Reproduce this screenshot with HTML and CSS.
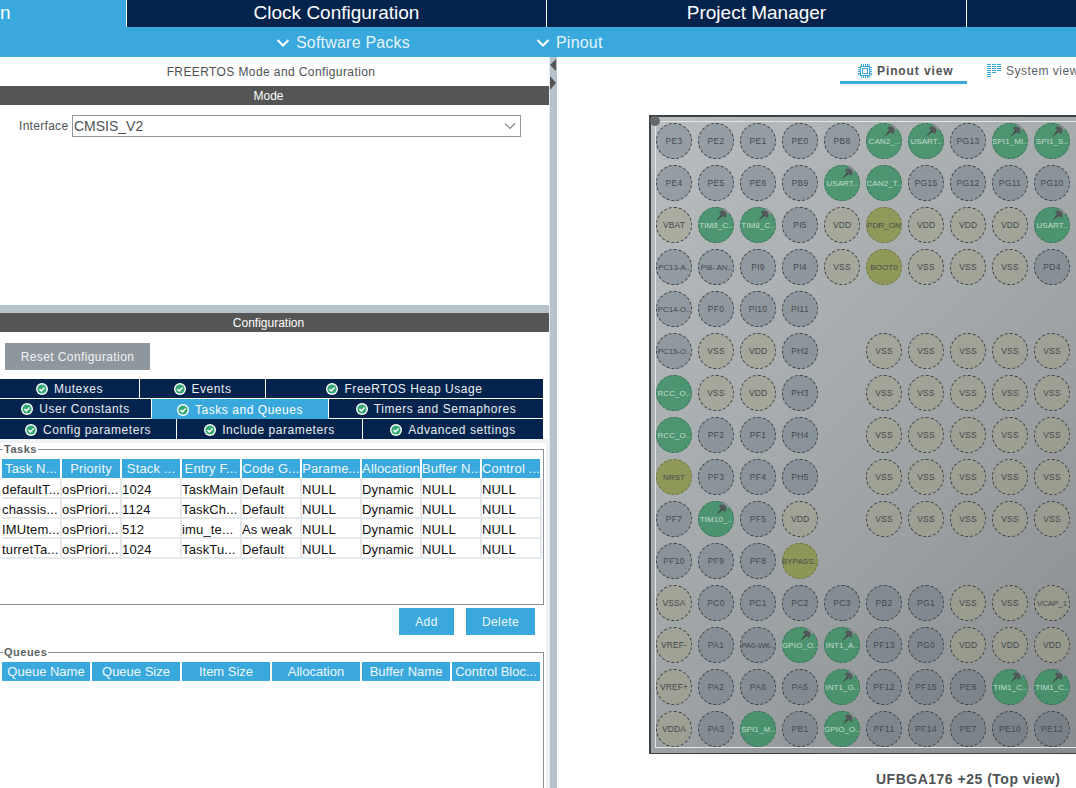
FILE: index.html
```html
<!DOCTYPE html>
<html lang="en">
<head>
  <meta charset="UTF-8" />
  <title>STM32CubeMX - Pinout &amp; Configuration</title>
  <link rel="stylesheet" href="styles.css">
</head>
<body>
  <svg class="defs" width="0" height="0">
    <symbol id="ok" viewBox="0 0 12 12">
      <circle cx="6" cy="6" r="6" fill="#fff"/>
      <circle cx="6" cy="6" r="4.6" fill="#33a874"/>
      <path d="M3.4 6l1.9 1.9 3.3-3.5" fill="none" stroke="#fff" stroke-width="1.5"/>
    </symbol>
    <symbol id="tack" viewBox="0 0 12 12">
      <path d="M0 12l4.5-6L6 7.5z" fill="#44484a"/>
      <path d="M2.5 4.5l5 5L9 8l-.5-2 2-2L8 1.5l-2 2-2-.5z" fill="#55595c"/>
      <path d="M7 .5L11.5 5l-1.2 1.2-4.5-4.5z" fill="#90949a"/>
    </symbol>
    <symbol id="down" viewBox="0 0 14 14">
      <path d="M1.5 4l5.5 5.5L12.5 4" fill="none" stroke="currentColor" stroke-width="2"/>
    </symbol>
  </svg>

  <header>
    <nav class="main-tabs">
      <a class="main-tab first">n</a>
      <a class="main-tab">Clock Configuration</a>
      <a class="main-tab">Project Manager</a>
      <a class="main-tab"></a>
    </nav>
    <nav class="sub-bar">
      <a class="sub-item"><svg class="chev"><use href="#down"/></svg>Software Packs</a>
      <a class="sub-item"><svg class="chev"><use href="#down"/></svg>Pinout</a>
    </nav>
  </header>

  <main>
    <section class="left">
      <div class="panel-title">FREERTOS Mode and Configuration</div>
      <div class="bar">Mode</div>
      <div class="mode-body">
        <label class="iface-label">Interface</label>
        <div class="select">CMSIS_V2<svg class="select-arrow" viewBox="0 0 12 8"><path d="M1 1.5l5 5 5-5" fill="none" stroke="#7d858b" stroke-width="1.2"/></svg></div>
      </div>
      <div class="splitter"></div>
      <div class="bar">Configuration</div>
      <div class="reset-row"><button class="reset">Reset Configuration</button></div>

      <div class="cfg-tabs">
        <div class="cfg-row row-a">
          <a class="cfg-tab"><svg class="ok"><use href="#ok"/></svg>Mutexes</a>
          <a class="cfg-tab"><svg class="ok"><use href="#ok"/></svg>Events</a>
          <a class="cfg-tab"><svg class="ok"><use href="#ok"/></svg>FreeRTOS Heap Usage</a>
        </div>
        <div class="cfg-row row-b">
          <a class="cfg-tab"><svg class="ok"><use href="#ok"/></svg>User Constants</a>
          <a class="cfg-tab active"><svg class="ok"><use href="#ok"/></svg>Tasks and Queues</a>
          <a class="cfg-tab"><svg class="ok"><use href="#ok"/></svg>Timers and Semaphores</a>
        </div>
        <div class="cfg-row row-c">
          <a class="cfg-tab"><svg class="ok"><use href="#ok"/></svg>Config parameters</a>
          <a class="cfg-tab"><svg class="ok"><use href="#ok"/></svg>Include parameters</a>
          <a class="cfg-tab"><svg class="ok"><use href="#ok"/></svg>Advanced settings</a>
        </div>
      </div>

      <div class="tab-page">
        <fieldset class="group tasks">
          <legend>Tasks</legend>
          <table>
            <thead>
              <tr><th>Task N...</th><th>Priority</th><th>Stack ...</th><th>Entry F...</th><th>Code G...</th><th>Parame...</th><th>Allocation</th><th>Buffer N...</th><th>Control ...</th></tr>
            </thead>
            <tbody>
              <tr><td>defaultT...</td><td>osPriori...</td><td>1024</td><td>TaskMain</td><td>Default</td><td>NULL</td><td>Dynamic</td><td>NULL</td><td>NULL</td></tr>
              <tr><td>chassis...</td><td>osPriori...</td><td>1124</td><td>TaskCh...</td><td>Default</td><td>NULL</td><td>Dynamic</td><td>NULL</td><td>NULL</td></tr>
              <tr><td>IMUtem...</td><td>osPriori...</td><td>512</td><td>imu_te...</td><td>As weak</td><td>NULL</td><td>Dynamic</td><td>NULL</td><td>NULL</td></tr>
              <tr><td>turretTa...</td><td>osPriori...</td><td>1024</td><td>TaskTu...</td><td>Default</td><td>NULL</td><td>Dynamic</td><td>NULL</td><td>NULL</td></tr>
            </tbody>
          </table>
        </fieldset>
        <div class="actions">
          <button class="btn add">Add</button>
          <button class="btn del">Delete</button>
        </div>
        <fieldset class="group queues">
          <legend>Queues</legend>
          <div class="queue-head">
            <span>Queue Name</span><span>Queue Size</span><span>Item Size</span><span>Allocation</span><span>Buffer Name</span><span>Control Bloc...</span>
          </div>
        </fieldset>
      </div>
    </section>

    <div class="divider">
      <i class="arrow-left"></i>
      <i class="arrow-right"></i>
    </div>

    <section class="right">
      <div class="view-tabs">
        <a class="view-tab on">
          <svg class="view-icon" viewBox="0 0 14 14" fill="none" stroke="#39a8dc">
            <rect x="2.5" y="2.5" width="9" height="9"/>
            <rect x="4.5" y="4.5" width="5" height="5"/>
            <path d="M3.5 0v2M5.5 0v2M7.5 0v2M9.5 0v2M11 0v2M3.5 12v2M5.5 12v2M7.5 12v2M9.5 12v2M11 12v2M0 3.5h2M0 5.5h2M0 7.5h2M0 9.5h2M0 11h2M12 3.5h2M12 5.5h2M12 7.5h2M12 9.5h2M12 11h2"/>
          </svg>
          Pinout view
        </a>
        <a class="view-tab">
          <svg class="view-icon" viewBox="0 0 14 14" fill="none" stroke="#39a8dc">
            <path d="M0 .5h4M5 .5h4M10 .5h4M0 2.5h4M5 2.5h4M10 2.5h4M0 4.5h4M5 4.5h4M10 4.5h4M0 6.5h4M5 6.5h4M10 6.5h4M0 8.5h4M5 8.5h4M0 10.5h4M0 12.5h4"/>
          </svg>
          System view
        </a>
      </div>

      <div class="chip">
        <i class="chip-dot"></i>
        <div class="pins">
          <div class="pin">PE3</div><div class="pin">PE2</div><div class="pin">PE1</div><div class="pin">PE0</div><div class="pin">PB8</div>
          <div class="pin used">CAN2_..<svg class="tack"><use href="#tack"/></svg></div>
          <div class="pin used">USART..<svg class="tack"><use href="#tack"/></svg></div>
          <div class="pin">PG13</div>
          <div class="pin used">SPI1_MI..<svg class="tack"><use href="#tack"/></svg></div>
          <div class="pin used">SPI1_S..<svg class="tack"><use href="#tack"/></svg></div>

          <div class="pin">PE4</div><div class="pin">PE5</div><div class="pin">PE6</div><div class="pin">PB9</div>
          <div class="pin used">USART..<svg class="tack"><use href="#tack"/></svg></div>
          <div class="pin used">CAN2_T..</div>
          <div class="pin">PG15</div><div class="pin">PG12</div><div class="pin">PG11</div><div class="pin">PG10</div>

          <div class="pin pwr">VBAT</div>
          <div class="pin used">TIM8_C..<svg class="tack"><use href="#tack"/></svg></div>
          <div class="pin used">TIM8_C..<svg class="tack"><use href="#tack"/></svg></div>
          <div class="pin">PI5</div><div class="pin pwr">VDD</div><div class="pin boot">PDR_ON</div>
          <div class="pin pwr">VDD</div><div class="pin pwr">VDD</div><div class="pin pwr">VDD</div>
          <div class="pin used">USART..<svg class="tack"><use href="#tack"/></svg></div>

          <div class="pin long">PC13-A..</div><div class="pin long">PI8- AN..</div><div class="pin">PI9</div><div class="pin">PI4</div>
          <div class="pin pwr">VSS</div><div class="pin boot">BOOT0</div><div class="pin pwr">VSS</div><div class="pin pwr">VSS</div><div class="pin pwr">VSS</div><div class="pin">PD4</div>

          <div class="pin long">PC14-O..</div><div class="pin">PF0</div><div class="pin">PI10</div><div class="pin">PI11</div>
          <div class="skip6"></div>

          <div class="pin long">PC15-O..</div><div class="pin pwr">VSS</div><div class="pin pwr">VDD</div><div class="pin">PH2</div>
          <div></div>
          <div class="pin pwr">VSS</div><div class="pin pwr">VSS</div><div class="pin pwr">VSS</div><div class="pin pwr">VSS</div><div class="pin pwr">VSS</div>

          <div class="pin used">RCC_O..</div><div class="pin pwr">VSS</div><div class="pin pwr">VDD</div><div class="pin">PH3</div>
          <div></div>
          <div class="pin pwr">VSS</div><div class="pin pwr">VSS</div><div class="pin pwr">VSS</div><div class="pin pwr">VSS</div><div class="pin pwr">VSS</div>

          <div class="pin used">RCC_O..</div><div class="pin">PF2</div><div class="pin">PF1</div><div class="pin">PH4</div>
          <div></div>
          <div class="pin pwr">VSS</div><div class="pin pwr">VSS</div><div class="pin pwr">VSS</div><div class="pin pwr">VSS</div><div class="pin pwr">VSS</div>

          <div class="pin boot">NRST</div><div class="pin">PF3</div><div class="pin">PF4</div><div class="pin">PH5</div>
          <div></div>
          <div class="pin pwr">VSS</div><div class="pin pwr">VSS</div><div class="pin pwr">VSS</div><div class="pin pwr">VSS</div><div class="pin pwr">VSS</div>

          <div class="pin">PF7</div>
          <div class="pin used">TIM10_..<svg class="tack"><use href="#tack"/></svg></div>
          <div class="pin">PF5</div><div class="pin pwr">VDD</div>
          <div></div>
          <div class="pin pwr">VSS</div><div class="pin pwr">VSS</div><div class="pin pwr">VSS</div><div class="pin pwr">VSS</div><div class="pin pwr">VSS</div>

          <div class="pin">PF10</div><div class="pin">PF9</div><div class="pin">PF8</div><div class="pin boot">BYPASS..</div>
          <div class="skip6"></div>

          <div class="pin pwr">VSSA</div><div class="pin">PC0</div><div class="pin">PC1</div><div class="pin">PC2</div><div class="pin">PC3</div>
          <div class="pin">PB2</div><div class="pin">PG1</div><div class="pin pwr">VSS</div><div class="pin pwr">VSS</div><div class="pin pwr long">VCAP_1</div>

          <div class="pin pwr">VREF-</div><div class="pin">PA1</div><div class="pin long">PA0-WK..</div>
          <div class="pin used">GPIO_O..<svg class="tack"><use href="#tack"/></svg></div>
          <div class="pin used">INT1_A..<svg class="tack"><use href="#tack"/></svg></div>
          <div class="pin">PF13</div><div class="pin">PG0</div><div class="pin pwr">VDD</div><div class="pin pwr">VDD</div><div class="pin pwr">VDD</div>

          <div class="pin pwr">VREF+</div><div class="pin">PA2</div><div class="pin">PA6</div><div class="pin">PA5</div>
          <div class="pin used">INT1_G..<svg class="tack"><use href="#tack"/></svg></div>
          <div class="pin">PF12</div><div class="pin">PF15</div><div class="pin">PE8</div>
          <div class="pin used">TIM1_C..<svg class="tack"><use href="#tack"/></svg></div>
          <div class="pin used">TIM1_C..<svg class="tack"><use href="#tack"/></svg></div>

          <div class="pin pwr">VDDA</div><div class="pin">PA3</div>
          <div class="pin used">SPI1_M..</div>
          <div class="pin">PB1</div>
          <div class="pin used">GPIO_O..<svg class="tack"><use href="#tack"/></svg></div>
          <div class="pin">PF11</div><div class="pin">PF14</div><div class="pin">PE7</div><div class="pin">PE10</div><div class="pin">PE12</div>
        </div>
      </div>
      <div class="chip-name">UFBGA176 +25 (Top view)</div>
    </section>
  </main>
</body>
</html>
```

FILE: styles.css
```css
html, body { margin: 0; height: 100%; overflow: hidden; }
body { width: 1076px; height: 788px; background: #fff; color: #4d5256; font-family: "Liberation Sans", Arial, sans-serif; font-size: 12px; display: flex; flex-direction: column; }
.defs { position: absolute; }
a { display: flex; align-items: center; }

/* top tabs */
.main-tabs { display: flex; height: 27px; background: #04244d; color: #fff; font-size: 19px; overflow: hidden; }
.main-tab { width: 420px; flex: none; box-sizing: border-box; padding-bottom: 2px; justify-content: center; border-right: 1px solid #fff; white-space: nowrap; }
.main-tab.first { width: 127px; background: #39a8dc; justify-content: flex-start; }
.main-tab:last-child { border: none; }
.sub-bar { display: flex; height: 30px; box-sizing: border-box; padding: 1px 0 0 276px; background: #39a8dc; color: #e6f4fb; font-size: 16px; letter-spacing: .2px; }
.sub-item { width: 260px; }
.chev { width: 14px; height: 14px; margin-right: 6px; color: #fff; }

main { flex: 1; display: flex; min-height: 0; }

/* left panel */
.left { width: 549px; flex: none; display: flex; flex-direction: column; overflow: hidden; }
.panel-title { height: 29px; line-height: 30px; text-align: center; letter-spacing: .4px; margin-left: -7px; flex: none; }
.bar { height: 19px; line-height: 20px; background: #545554; color: #fff; text-align: center; padding-right: 12px; flex: none; }
.mode-body { height: 200px; display: flex; align-items: flex-start; padding-top: 10px; box-sizing: border-box; flex: none; }
.iface-label { margin-left: 19px; width: 53px; line-height: 22px; letter-spacing: .3px; }
.select { width: 446px; height: 20px; line-height: 20px; border: 1px solid #8f979e; padding-left: 1px; font-size: 14px; position: relative; }
.select-arrow { position: absolute; right: 4px; top: 6px; width: 12px; height: 8px; }
.splitter { height: 8px; background: #b6c2c9; flex: none; }
.reset-row { height: 47px; padding: 11px 0 0 5px; box-sizing: border-box; flex: none; }
.reset { width: 145px; height: 27px; border: none; background: #8f979e; color: #f0f2f3; font: 12px "Liberation Sans", Arial, sans-serif; letter-spacing: .4px; }

.cfg-tabs { width: 543px; flex: none; }
.cfg-row { display: grid; height: 20px; column-gap: 1px; }
.row-a { grid-template-columns: 139px 125px 1fr; }
.row-b { grid-template-columns: 151px 176px 1fr; }
.row-c { grid-template-columns: 176px 185px 1fr; }
.cfg-tab { background: #04244d; color: #e8edf2; justify-content: center; padding-top: 1px; letter-spacing: .55px; border-bottom: 1px solid #fff; box-sizing: border-box; }
.row-c .cfg-tab { border-bottom: none; }
.cfg-tab.active { background: #39a8dc; color: #fff; border-bottom: none; }
.ok { width: 12px; height: 12px; margin-right: 6px; flex: none; }

.tab-page { flex: 1; background: #fff; border-top: 4px solid #f0f3f5; border-right: 3px solid #f0f3f5; }
.group { margin: 0 0 0 -3px; width: 547px; box-sizing: border-box; border: 1px solid #8a939b; padding: 4px 0 0 4px; min-width: 0; }
.group legend { padding: 0 1px; margin-left: 1px; font-size: 11px; font-weight: bold; color: #5a5f63; letter-spacing: .5px; line-height: 12px; }
.tasks { height: 162px; }
.queues { height: 200px; margin-top: 5px; }

table { border-collapse: separate; border-spacing: 0; table-layout: fixed; width: 540px; font-size: 13px; letter-spacing: .15px; color: #111; }
th { height: 19px; padding: 0; font-weight: normal; background: #39a8dc; color: #eef8fc; border-right: 2px solid #fff; border-bottom: 1px solid #fff; white-space: nowrap; overflow: hidden; }
td { height: 16px; padding: 2px 0 0; border-right: 2px solid #e6eaec; border-bottom: 2px solid #e6eaec; white-space: nowrap; overflow: hidden; }

.actions { display: flex; justify-content: flex-end; gap: 12px; padding: 3px 11px 0 0; height: 36px; box-sizing: border-box; }
.btn { height: 27px; border: none; background: #39a8dc; color: #eef8fc; font: 12px "Liberation Sans", Arial, sans-serif; letter-spacing: .4px; }
.add { width: 55px; }
.del { width: 69px; }

.queue-head { display: grid; grid-template-columns: repeat(6, 88px); column-gap: 2px; width: 538px; font-size: 13px; }
.queue-head span { height: 19px; line-height: 19px; background: #39a8dc; color: #eef8fc; text-align: center; white-space: nowrap; overflow: hidden; }

/* splitter between the panels */
.divider { width: 8px; flex: none; background: #b6c2c9; box-sizing: border-box; border-left: 1px solid #e8ecee; display: flex; flex-direction: column; gap: 5px; padding-top: 2px; }
.divider i { display: block; width: 0; height: 0; border-style: solid; }
.arrow-left { border-width: 6px 6px 6px 0; border-color: transparent #555 transparent transparent; }
.arrow-right { border-width: 7px 0 7px 6px; border-color: transparent transparent transparent #555; }

/* right panel */
.right { flex: 1; min-width: 0; overflow: hidden; }
.view-tabs { height: 58px; display: flex; align-items: flex-start; padding-left: 283px; box-sizing: border-box; white-space: nowrap; }
.view-tab { height: 27px; padding: 4px 0 3px; box-sizing: border-box; font-size: 12px; letter-spacing: .5px; color: #5c6064; margin-left: 20px; flex: none; }
.view-tab.on { width: 127px; margin-left: 0; padding-bottom: 0; border-bottom: 3px solid #39a8dc; font-weight: bold; letter-spacing: .9px; color: #505356; padding-left: 18px; }
.view-icon { width: 14px; height: 14px; margin-right: 5px; flex: none; }

.chip { height: 639px; box-sizing: border-box; margin-left: 92px; border: 1px solid #3d4144; border-width: 2px 0 1px 2px; background: linear-gradient(135deg, #b9bdc0, #a4a9ac 45%, #888c8e); padding: 4px 0 5px 4px; position: relative; }
.chip-dot { position: absolute; left: -1px; top: -1px; width: 10px; height: 10px; border-radius: 50%; background: #66696b; }
.pins { height: 100%; box-sizing: border-box; border-left: 1px solid #e4e7e8; border-top: 1px solid #e4e7e8; border-bottom: 1px solid #e4e7e8; padding-top: 1px; display: grid; grid-template-columns: repeat(10, 36px); grid-auto-rows: 36px; gap: 6px; }
.skip6 { grid-column: span 6; }
.pin { position: relative; width: 36px; height: 36px; box-sizing: border-box; border-radius: 50%; border: 1px dashed #3c4045; background: rgba(90, 105, 120, .35); color: #45494e; font-size: 8.5px; letter-spacing: .3px; display: flex; align-items: center; justify-content: center; white-space: nowrap; }
.pin.pwr { background: rgba(160, 160, 130, .5); letter-spacing: .1px; }
.pin.used { background: rgba(60, 145, 100, .85); border-color: rgba(40, 70, 55, .45); color: #c4dccd; font-size: 8px; letter-spacing: .1px; }
.pin.boot { background: rgba(135, 145, 60, .75); border-color: rgba(70, 75, 40, .45); font-size: 8px; letter-spacing: .1px; }
.pin.long { font-size: 8px; letter-spacing: -.1px; }
.tack { position: absolute; left: 17px; top: -1px; width: 14px; height: 14px; }
.chip-name { margin: 17px 0 0 319px; font-size: 14px; font-weight: bold; color: #505356; letter-spacing: .5px; white-space: nowrap; }
```
